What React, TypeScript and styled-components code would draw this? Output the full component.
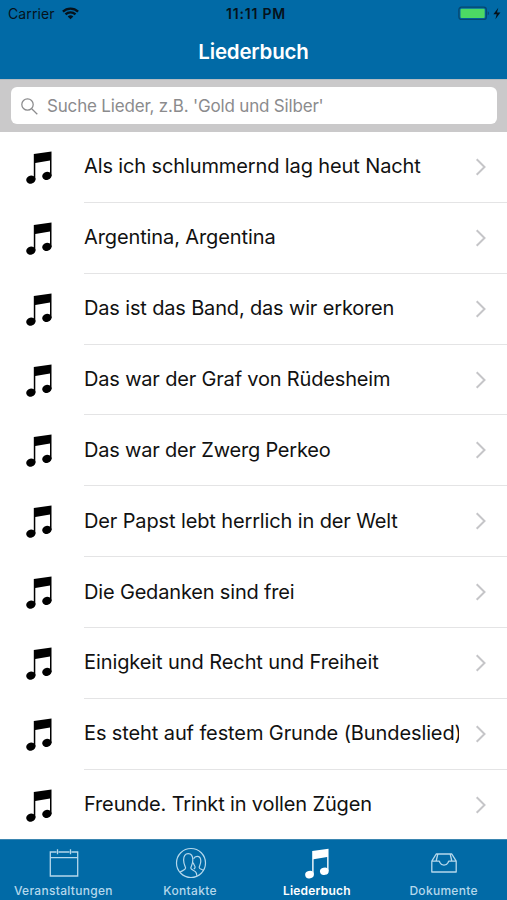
import React from "react";
import styled, { createGlobalStyle } from "styled-components";

const GlobalStyle = createGlobalStyle`
  * { box-sizing: border-box; }
  body {
    margin: 0;
    background: #fff;
    font-family: Inter, Roboto, "Liberation Sans", sans-serif;
  }
`;

const BLUE = "#016aa6";

const Screen = styled.div`
  width: 507px;
  height: 900px;
  display: flex;
  flex-direction: column;
  overflow: hidden;
  background: #fff;
`;

const Header = styled.header`
  height: 79px;
  flex: none;
  background: ${BLUE};
`;

const StatusBar = styled.div`
  height: 27px;
  padding: 0 5px 0 8px;
  display: grid;
  grid-template-columns: 1fr auto 1fr;
  align-items: center;
  color: #06121b;
`;

const Carrier = styled.div`
  display: flex;
  align-items: center;
  gap: 7px;
  font-size: 14px;
  letter-spacing: 0.1px;
`;

const Clock = styled.div`
  font-size: 14px;
  font-weight: 600;
  letter-spacing: 0.8px;
  padding-left: 2px;
`;

const Power = styled.div`
  display: flex;
  justify-content: flex-end;
`;

const Title = styled.h1`
  margin: 0;
  height: 50px;
  line-height: 50px;
  text-align: center;
  color: #fff;
  font-size: 20.5px;
  font-weight: 600;
  letter-spacing: -0.2px;
`;

const SearchBar = styled.div`
  flex: none;
  height: 53px;
  padding: 7.4px 10px 8px 11px;
  background: #cac9ca;
  border-top: 1px solid #b4bcc1;
`;

const SearchField = styled.div`
  height: 37px;
  display: flex;
  align-items: center;
  gap: 9px;
  padding: 1px 0 0 10px;
  border-radius: 6px;
  background: #fff;
  color: #8b8b8d;
  font-size: 17px;
`;

const Placeholder = styled.span`
  letter-spacing: -0.18px;
  white-space: nowrap;
`;

const SongList = styled.ul`
  margin: 0;
  padding: 0;
  list-style: none;
  flex: 1;
  min-height: 0;
  overflow: hidden;
`;

const SongRow = styled.li`
  height: 70.87px;
  display: flex;
  padding-left: 26px;
`;

const NoteCell = styled.div`
  width: 58px;
  flex: none;
  padding-top: 19px;
`;

const SongBody = styled.div<{ $last: boolean }>`
  flex: 1;
  display: flex;
  justify-content: space-between;
  align-items: center;
  padding-right: 20px;
  border-bottom: 1px solid ${(p) => (p.$last ? "transparent" : "#e4e4e5")};
`;

const SongName = styled.span<{ $spacing: number }>`
  width: 375px;
  overflow: hidden;
  white-space: nowrap;
  font-size: 20px;
  line-height: 30px;
  padding-bottom: 1px;
  color: #111;
  letter-spacing: ${(p) => p.$spacing}px;
`;

const TabBar = styled.nav`
  flex: none;
  height: 61px;
  display: grid;
  grid-template-columns: repeat(4, 1fr);
  background: ${BLUE};
  border-top: 1px solid #3b86b1;
`;

const Tab = styled.div<{ $active?: boolean }>`
  display: flex;
  flex-direction: column;
  align-items: center;
  color: ${(p) => (p.$active ? "#fff" : "#b5d8ec")};
`;

const TabIcon = styled.div`
  height: 43px;
  padding: 3px 0 0 1px;
  display: flex;
  align-items: center;
`;

const TabLabel = styled.span<{ $spacing: number; $active?: boolean }>`
  font-size: 12px;
  font-weight: ${(p) => (p.$active ? 600 : 500)};
  line-height: 16px;
  letter-spacing: ${(p) => p.$spacing}px;
`;

const Note = ({ width = 26, height = 33 }: { width?: number; height?: number }) => (
  <svg width={width} height={height} viewBox="0 0 26 33" fill="currentColor">
    <path d="M7.8 3 25.5.4V25H24V9.5L9.3 11.9V28.5H7.8Z" />
    <ellipse cx="4.9" cy="28.6" rx="4.7" ry="4" transform="rotate(-14 4.9 28.6)" />
    <ellipse cx="20.9" cy="24.9" rx="4.7" ry="4" transform="rotate(-14 20.9 24.9)" />
  </svg>
);

const Wifi = () => (
  <svg width="17" height="13" viewBox="0 0 17 13" fill="none" stroke="currentColor" strokeWidth="2.3">
    <path d="M.9 4.7a11 11 0 0 1 15.2 0M3.5 7.4a7.3 7.3 0 0 1 10 0" />
    <path d="M5.7 9.4a4.2 4.2 0 0 1 5.6 0L8.5 12.3Z" fill="currentColor" stroke="none" />
  </svg>
);

const Battery = () => (
  <svg width="44" height="15" viewBox="0 0 44 15">
    <rect x=".9" y="1.2" width="27.4" height="12.2" rx="2.5" fill="none" stroke="#07476f" strokeWidth="1.3" />
    <rect x="2.5" y="2.7" width="24.2" height="9.2" rx="1" fill="#4cd964" />
    <path d="M29.7 5.3c1.8.8 1.8 3.3 0 4Z" fill="#07476f" />
    <path d="m40.3 1.7-4.9 6.6h3.3l-1.3 5 5-6.7h-3.4Z" fill="#06121b" />
  </svg>
);

const SearchIcon = () => (
  <svg width="17" height="17" viewBox="0 0 17 17" fill="none" stroke="#8b8b8d" strokeWidth="1.25">
    <circle cx="6.5" cy="6.5" r="5.7" />
    <path d="m10.7 10.7 5.6 5.5" />
  </svg>
);

const Chevron = () => (
  <svg width="12" height="18" viewBox="0 0 12 18" fill="none" stroke="#c5c5c8" strokeWidth="2">
    <path d="m1.7 1.3 7.8 7.7-7.8 7.7" />
  </svg>
);

const CalendarIcon = () => (
  <svg width="30" height="30" viewBox="0 0 30 30" fill="none" stroke="currentColor" strokeWidth="1.3">
    <path d="M7.5 4H1.3v24h27.4V4h-6.2M9.5 4h11M1.3 9.7h27.4M8.5 1.2v5M21.5 1.2v5" />
  </svg>
);

const ContactsIcon = () => (
  <svg width="32" height="32" viewBox="0 0 32 32" fill="none" stroke="currentColor" strokeWidth="1.2">
    <circle cx="16" cy="16" r="14.5" />
    <path d="M5 25.2c1.8-1.4 5.6-2.3 5.6-4.2 0-1.4-2-3.3-2-7.9 0-4 1.6-6.4 4.6-6.4s4.6 2.6 4.6 6.3c0 4.7-2 6.6-2 8 0 1.9 4 2.6 5 4.1.7.9 1 2 .9 3.6" />
    <path d="M18.6 11.8c.7-1.6 1.9-2.5 3.5-2.5 2.5 0 3.7 2 3.7 4.8 0 3.7-1.6 5-1.6 6.3 0 1.7 3 1.8 4.2 3.2M18.3 15.6c.4 2.6 1.8 3.2 1.8 4.6 0 .9-.6 1.3-1.3 1.8" />
  </svg>
);

const InboxIcon = () => (
  <svg width="28" height="22" viewBox="0 0 28 22" fill="none" stroke="currentColor" strokeWidth="1.3" strokeLinejoin="round">
    <path d="M1.8 9.1V20h24.4V9.1L21.8 2H6.2L1.8 9.1H9c.6 0 .6.8 1 1.6.8 1.6 2.2 2.4 4 2.4s3.2-.8 4-2.4c.4-.8.4-1.6 1-1.6h7.2M7.8 2 6.2 9M20.2 2l1.6 7" />
  </svg>
);

const songs = [
  { name: "Als ich schlummernd lag heut Nacht", spacing: -0.12 },
  { name: "Argentina, Argentina", spacing: -0.11 },
  { name: "Das ist das Band, das wir erkoren", spacing: -0.16 },
  { name: "Das war der Graf von Rüdesheim", spacing: -0.18 },
  { name: "Das war der Zwerg Perkeo", spacing: -0.2 },
  { name: "Der Papst lebt herrlich in der Welt", spacing: -0.13 },
  { name: "Die Gedanken sind frei", spacing: -0.17 },
  { name: "Einigkeit und Recht und Freiheit", spacing: -0.09 },
  { name: "Es steht auf festem Grunde (Bundeslied)", spacing: -0.11 },
  { name: "Freunde. Trinkt in vollen Zügen", spacing: -0.15 },
];

const tabs = [
  { label: "Veranstaltungen", icon: <CalendarIcon />, spacing: 0.3 },
  { label: "Kontakte", icon: <ContactsIcon />, spacing: 0.35 },
  { label: "Liederbuch", icon: <Note width={24} height={31} />, spacing: 0.2, active: true },
  { label: "Dokumente", icon: <InboxIcon />, spacing: 0.3 },
];

export default function App() {
  return (
    <Screen>
      <GlobalStyle />
      <Header>
        <StatusBar>
          <Carrier>
            Carrier
            <Wifi />
          </Carrier>
          <Clock>11:11 PM</Clock>
          <Power>
            <Battery />
          </Power>
        </StatusBar>
        <Title>Liederbuch</Title>
      </Header>
      <SearchBar>
        <SearchField>
          <SearchIcon />
          <Placeholder>Suche Lieder, z.B. 'Gold und Silber'</Placeholder>
        </SearchField>
      </SearchBar>
      <SongList>
        {songs.map((song, i) => (
          <SongRow key={song.name}>
            <NoteCell>
              <Note />
            </NoteCell>
            <SongBody $last={i === songs.length - 1}>
              <SongName $spacing={song.spacing}>{song.name}</SongName>
              <Chevron />
            </SongBody>
          </SongRow>
        ))}
      </SongList>
      <TabBar>
        {tabs.map((tab) => (
          <Tab key={tab.label} $active={tab.active}>
            <TabIcon>{tab.icon}</TabIcon>
            <TabLabel $spacing={tab.spacing} $active={tab.active}>
              {tab.label}
            </TabLabel>
          </Tab>
        ))}
      </TabBar>
    </Screen>
  );
}
